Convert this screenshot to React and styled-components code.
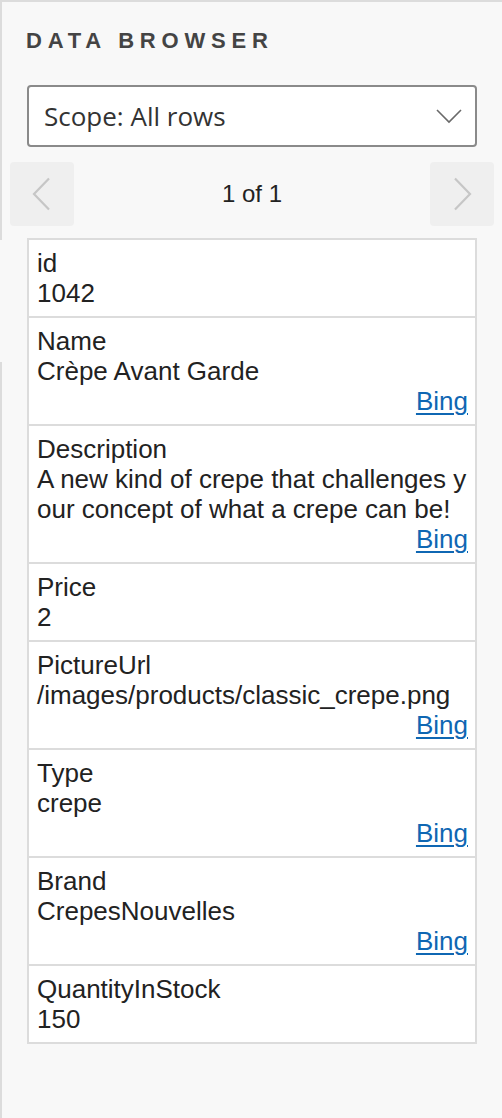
import React from "react";
import styled, { createGlobalStyle } from "styled-components";

const GlobalStyle = createGlobalStyle`
  html, body {
    margin: 0;
    padding: 0;
    background: #f8f8f8;
  }
  * { box-sizing: border-box; }
`;

const Panel = styled.div`
  min-height: 100vh;
  border-top: 2px solid #dcdcdc;
  padding: 26px 25px 40px 27px;
  background-color: #f8f8f8;
  background-image: linear-gradient(
    to bottom,
    #dcdcdc 0px,
    #dcdcdc 238px,
    transparent 238px,
    transparent 360px,
    #dcdcdc 360px
  );
  background-size: 2px 100%;
  background-repeat: no-repeat;
  font-family: "Liberation Sans", Arial, sans-serif;
`;

const Title = styled.h1`
  margin: 0 0 0 -1px;
  font-family: "Liberation Sans", Arial, sans-serif;
  font-size: 22px;
  line-height: 26px;
  font-weight: 700;
  letter-spacing: 5.8px;
  color: #444444;
`;

const Select = styled.div`
  margin-top: 31px;
  height: 62px;
  display: flex;
  align-items: center;
  justify-content: space-between;
  padding: 0 13px 0 15px;
  background: #ffffff;
  border: 2px solid #8a8a8a;
  border-radius: 4px;
  font-family: "Open Sans", "Noto Sans", sans-serif;
  font-size: 26px;
  color: #333333;
`;

const Pager = styled.div`
  margin: 15px -17px 0 -17px;
  display: flex;
  align-items: center;
  justify-content: space-between;
`;

const PagerButton = styled.button`
  width: 64px;
  height: 64px;
  padding: 0;
  border: none;
  border-radius: 4px;
  background: #efefef;
  display: flex;
  align-items: center;
  justify-content: center;
  cursor: pointer;
`;

const PageLabel = styled.div`
  font-size: 24px;
  color: #222222;
`;

const List = styled.div`
  margin-top: 12px;
  background: #ffffff;
  border: 2px solid #dcdcdc;
`;

const Row = styled.div`
  padding: 8px 7px 8px 8px;
  font-size: 26px;
  line-height: 30px;
  color: #222222;
  word-break: break-all;
  border-bottom: 2px solid #dcdcdc;
  &:last-child {
    border-bottom: none;
  }
`;

const Line = styled.div``;

const LinkLine = styled.div`
  text-align: right;
`;

const Link = styled.a`
  color: #0f67b3;
  text-decoration: underline;
  text-decoration-thickness: 2px;
  text-underline-offset: 3px;
`;

const Chevron = ({ dir }) => (
  <svg width="20" height="34" viewBox="0 0 20 34" fill="none">
    <path
      d={dir === "left" ? "M17 1.5 L2 17 L17 32.5" : "M3 1.5 L18 17 L3 32.5"}
      stroke="#c6c6c6"
      strokeWidth="2.2"
    />
  </svg>
);

const DropArrow = () => (
  <svg width="26" height="16" viewBox="0 0 26 16" fill="none">
    <path d="M1 2 L13 14 L25 2" stroke="#6a6a6a" strokeWidth="1.6" />
  </svg>
);

const fields = [
  { label: "id", value: "1042" },
  { label: "Name", value: "Crèpe Avant Garde", bing: true },
  {
    label: "Description",
    value: "A new kind of crepe that challenges your concept of what a crepe can be!",
    bing: true,
  },
  { label: "Price", value: "2" },
  { label: "PictureUrl", value: "/images/products/classic_crepe.png", bing: true },
  { label: "Type", value: "crepe", bing: true },
  { label: "Brand", value: "CrepesNouvelles", bing: true },
  { label: "QuantityInStock", value: "150" },
];

export default function App() {
  return (
    <>
      <GlobalStyle />
      <Panel>
        <Title>DATA BROWSER</Title>
        <Select>
          <span>Scope: All rows</span>
          <DropArrow />
        </Select>
        <Pager>
          <PagerButton aria-label="Previous">
            <Chevron dir="left" />
          </PagerButton>
          <PageLabel>1 of 1</PageLabel>
          <PagerButton aria-label="Next">
            <Chevron dir="right" />
          </PagerButton>
        </Pager>
        <List>
          {fields.map((f) => (
            <Row key={f.label}>
              <Line>{f.label}</Line>
              <Line>{f.value}</Line>
              {f.bing && (
                <LinkLine>
                  <Link href="#">Bing</Link>
                </LinkLine>
              )}
            </Row>
          ))}
        </List>
      </Panel>
    </>
  );
}
